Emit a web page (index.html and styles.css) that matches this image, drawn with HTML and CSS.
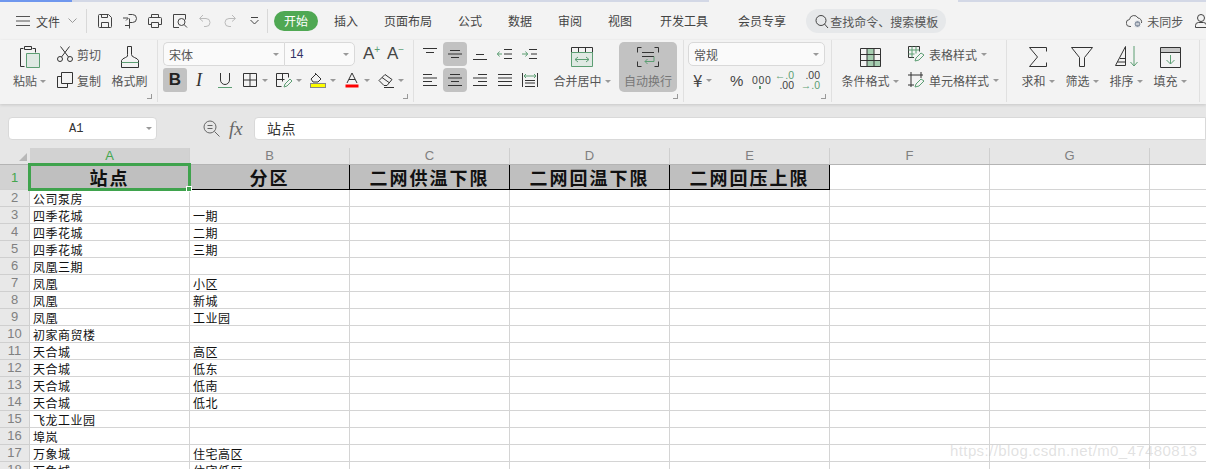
FILE: index.html
```html
<!DOCTYPE html>
<html lang="zh">
<head>
<meta charset="utf-8">
<title>WPS 表格</title>
<link rel="stylesheet" href="styles.css">
</head>
<body>
<div class="app">
  <div class="strip"><span class="strip-a"></span><span class="strip-b"></span><span class="strip-gap"></span><span class="strip-c"></span></div>

  <header class="menubar">
    <svg class="burger" width="14" height="12" viewBox="0 0 14 12"><path d="M0 1.500h14M0 6h14M0 10.500h14"/></svg>
    <span class="file">文件</span>
    <svg class="chev" width="9" height="6" viewBox="0 0 9 6"><path d="M.5 .5l4 4 4-4"/></svg>
    <span class="vsep vsep-a"></span>
    <div class="quick">
      <span class="qb"><svg width="16" height="16" viewBox="0 0 16 16"><path d="M1.500 2.500q0-1 1-1h9l3 3v9q0 1-1 1h-11q-1 0-1-1zM4.500 14.500v-5h7v5M4.500 1.500v3h6v-3"/></svg></span>
      <span class="qb"><svg width="16" height="16" viewBox="0 0 16 16"><path d="M6.500 1.500h4a4 4 0 0 1 0 8h-3M7.500 5.500v10M1 5h5M4 7.500l2.500-2.500M3 12.500h4"/></svg></span>
      <span class="qb"><svg width="16" height="16" viewBox="0 0 16 16"><path d="M4.500 4.500v-3h7v3M4.500 11.500h-3v-6q0-1 1-1h11q1 0 1 1v6h-3M4.500 9.500h7v5h-7z"/></svg></span>
      <span class="qb"><svg width="16" height="16" viewBox="0 0 16 16"><path d="M7 14.500h-5.500v-13h12v5"/><circle cx="9.500" cy="9" r="3.500"/><path d="M12 11.500l3 3"/></svg></span>
      <span class="qb dim"><svg width="14" height="14" viewBox="0 0 14 14"><path d="M5 1l-3.500 3.500 3.500 3M2 4.500h6a4 4 0 0 1 0 8h-2"/></svg></span>
      <span class="qb dim"><svg width="14" height="14" viewBox="0 0 14 14"><path d="M9 1l3.500 3.500-3.500 3M12 4.500h-6a4 4 0 0 0 0 8h2"/></svg></span>
      <span class="qb"><svg width="9" height="8" viewBox="0 0 9 8"><path d="M1 .5h7M.5 3l4 4 4-4"/></svg></span>
    </div>
    <span class="vsep"></span>
    <nav class="tabs">
      <span class="tab active">开始</span>
      <span class="tab">插入</span>
      <span class="tab">页面布局</span>
      <span class="tab">公式</span>
      <span class="tab">数据</span>
      <span class="tab">审阅</span>
      <span class="tab">视图</span>
      <span class="tab wide">开发工具</span>
      <span class="tab wider">会员专享</span>
    </nav>
    <div class="search">
      <svg width="14" height="15" viewBox="0 0 14 15"><circle cx="6" cy="6.500" r="5"/><path d="M9.500 10l3.500 4"/></svg>
      <span>查找命令、搜索模板</span>
    </div>
    <div class="sync">
      <svg width="17" height="14" viewBox="0 0 17 14"><path d="M5 12.500h-1a3.500 3.500 0 0 1-.5-7 4.500 4.500 0 0 1 8.500-1.500 4 4 0 0 1 3.500 5"/><circle class="badge" cx="11.500" cy="10" r="3.500"/><path class="badge-line" d="M10 10h3"/></svg>
      <span>未同步</span>
    </div>
    <svg class="user" width="16" height="14" viewBox="0 0 16 14"><circle cx="6" cy="4" r="3.500"/><path d="M.5 13.500v-2q0-3 3-3h5q3 0 3 3v2z"/></svg>
  </header>

  <section class="ribbon">
    <div class="group g1">
      <div class="big c-paste">
        <span class="big-icon"><svg width="22" height="24" viewBox="0 0 22 24"><path d="M5.500 21.500h-4v-18h3M13.500 3.500h3v4"/><path d="M5.500 1.500h7v3h-7z"/><path class="g-fill" d="M7.500 8.500h13v14h-13z"/></svg></span>
        <span class="lab">粘贴<i class="caret"></i></span>
      </div>
      <div class="stack c-clip">
        <div class="line"><svg width="16" height="16" viewBox="0 0 16 16"><circle cx="3" cy="13" r="2.500"/><circle cx="13" cy="13" r="2.500"/><path d="M4.500 11l8-10.500M11.500 11l-8-10.500"/></svg><span>剪切</span></div>
        <div class="line"><svg width="16" height="16" viewBox="0 0 16 16"><path d="M4.500 4.500h-4v11h10v-4"/><path d="M4.500 .5h11v11h-11z"/></svg><span>复制</span></div>
      </div>
      <div class="big c-brush">
        <span class="big-icon"><svg width="18" height="24" viewBox="0 0 18 24"><path d="M6.500 1.500h4v8q0 2 3 3t4 3v7h-17v-7q1-2 4-3t2-3z"/><path class="green" d="M.5 17.500h17"/></svg></span>
        <span class="lab">格式刷</span>
      </div>
      <i class="launch"></i>
    </div>

    <div class="group g2">
      <div class="g2-top">
        <div class="combo c-font"><span>宋体</span><i class="caret"></i></div>
        <div class="combo c-size"><span>14</span><i class="caret"></i></div>
        <span class="grow up">A<sup>+</sup></span>
        <span class="grow dn">A<sup>−</sup></span>
      </div>
      <div class="g2-bot">
        <span class="ib on bold">B</span>
        <span class="ib italic">I</span>
        <span class="ib u"><svg width="16" height="16" viewBox="0 0 16 16"><path d="M3.500 1v7a4.500 4.500 0 0 0 9 0v-7"/><path class="green" d="M1 15.500h14"/></svg></span>
        <span class="split"><span class="ib"><svg width="16" height="16" viewBox="0 0 16 16"><path d="M1.500 1.500h13v13h-13zM8 1.500v13M1.500 8h13"/></svg></span><i class="caret"></i></span>
        <span class="split"><span class="ib"><svg width="16" height="16" viewBox="0 0 16 16"><path d="M.5 1.500h12v4M.5 1.500v13h5M6.500 1.500v8M.5 7.500h8"/><path class="green" d="M8 15l1-3 5-5 2 2-5 5z"/></svg></span><i class="caret"></i></span>
        <span class="split"><span class="ib"><svg width="16" height="16" viewBox="0 0 16 16"><path d="M1 7l5-5 5 5-3 3h-5zM6 2l-1-1"/><rect class="yellow" x=".5" y="11.500" width="15" height="4"/></svg></span><i class="caret"></i></span>
        <span class="split"><span class="ib"><svg width="16" height="16" viewBox="0 0 16 16"><path d="M3 11l5-10 5 10M5 7.500h6"/><path class="red" d="M1.500 14h13"/></svg></span><i class="caret"></i></span>
        <span class="split"><span class="ib"><svg width="16" height="16" viewBox="0 0 16 16"><path d="M1 8.500l6-6 7 5-5 6h-3zM4 5.500l7 5M6 15.500h10"/></svg></span><i class="caret"></i></span>
      </div>
      <i class="launch"></i>
    </div>

    <div class="group g3">
      <div class="aligns">
        <span class="ab"><svg width="16" height="12" viewBox="0 0 16 12"><path d="M1 .5h14M4 4.500h8"/></svg></span>
        <span class="ab on"><svg width="16" height="12" viewBox="0 0 16 12"><path d="M3 2.500h10M1 6h14M4 9.500h8"/></svg></span>
        <span class="ab"><svg width="16" height="12" viewBox="0 0 16 12"><path d="M4 6.500h8M1 11.500h14"/></svg></span>
        <span class="ab"><svg width="16" height="12" viewBox="0 0 16 12"><path d="M7 1.500h8M7 6h8M7 10.500h8"/><path class="green" d="M5 6h-5M2.500 3.500l-2 2.500 2 2.500"/></svg></span>
        <span class="ab"><svg width="16" height="12" viewBox="0 0 16 12"><path d="M7 1.500h8M9 6h6M7 10.500h8"/><path class="green" d="M0 6h6M3.500 3.500l2 2.500-2 2.500"/></svg></span>
        <span class="ab"><svg width="14" height="14" viewBox="0 0 14 14"><path d="M0 1.500h9M0 5h14M0 8.500h9M0 12.500h14"/></svg></span>
        <span class="ab on"><svg width="14" height="14" viewBox="0 0 14 14"><path d="M2 1.500h10M0 5h14M3 8.500h8M0 12.500h14"/></svg></span>
        <span class="ab"><svg width="14" height="14" viewBox="0 0 14 14"><path d="M5 1.500h9M0 5h14M5 8.500h9M0 12.500h14"/></svg></span>
        <span class="ab"><svg width="14" height="14" viewBox="0 0 14 14"><path d="M0 1.500h14M0 5h14M0 8.500h14M0 12.500h14"/></svg></span>
        <span class="ab"><svg width="16" height="14" viewBox="0 0 16 14"><path d="M.5 0v14M15.500 0v14M3 7.500h10M3 10h10M3 13.500h10"/><path class="green" d="M2 3h12M4 1l-2 2 2 2M12 1l2 2-2 2"/></svg></span>
      </div>
      <div class="big c-merge">
        <span class="big-icon"><svg width="22" height="20" viewBox="0 0 22 20"><path d="M.5 .5h21v5h-21zM7.500 .5v5M14.500 .5v5"/><path class="g-fill" d="M.5 5.500h21v14h-21z"/><path class="green" d="M4 12.500h14M7 10l-3 2.500 3 2.500M15 10l3 2.500-3 2.500"/></svg></span>
        <span class="lab">合并居中<i class="caret"></i></span>
      </div>
      <div class="wrap-btn">
        <span class="big-icon"><svg width="22" height="20" viewBox="0 0 22 20"><path d="M4.500 .5h-4v5M17.500 .5h4v5M4.500 19.500h-4v-5M17.500 19.500h4v-5M5 5.500h12M5 9.500h12"/><path class="green" d="M17 9.500v5h-9M10.500 12l-2.500 2.500 2.500 2.500"/></svg></span>
        <span class="lab">自动换行</span>
      </div>
      <i class="launch"></i>
    </div>

    <div class="group g4">
      <div class="combo c-fmt"><span>常规</span><i class="caret"></i></div>
      <div class="num">
        <span class="n-yen"><span>¥</span><i class="caret"></i></span>
        <span class="n-pct">%</span>
        <span class="n-th">000<b></b></span>
        <span class="n-dec"><em>←.0</em><span>.00</span></span>
        <span class="n-inc"><span>.00</span><em>→.0</em></span>
      </div>
      <i class="launch"></i>
    </div>

    <div class="group g5">
      <div class="big c-cond">
        <span class="big-icon"><svg width="21" height="19" viewBox="0 0 21 19"><path d="M7 .5h7v6h-7zM7 6.500h7v6h7v6h-14z" class="g-block"/><path d="M.5 .5h20v18h-20zM.5 6.500h20M.5 12.500h20M7 .5v18M14 .5v18"/></svg></span>
        <span class="lab">条件格式<i class="caret"></i></span>
      </div>
      <div class="stack c-style">
        <div class="line"><svg width="17" height="16" viewBox="0 0 17 16"><path d="M6 11.500h-5.500v-11h11v5"/><path class="green" d="M.5 4h11M.5 8h6M4 .5v11M8 .5v7"/><path class="green" d="M7 15l1-3 5-5 3 2-5 5z"/></svg><span>表格样式</span><i class="caret"></i></div>
        <div class="line"><svg width="17" height="16" viewBox="0 0 17 16"><path d="M3 0v15M0 3h15M13 0v6M0 13h6"/><path class="green" d="M7 15l1-3 5-5 3 2-5 5z"/></svg><span>单元格样式</span><i class="caret"></i></div>
      </div>
    </div>

    <div class="group g6">
      <div class="big c-tool">
        <span class="big-icon"><svg width="18" height="20" viewBox="0 0 18 20"><path d="M17.500 4.500v-4h-17l8 9.500-8 9.500h17v-4"/></svg></span>
        <span class="lab">求和<i class="caret"></i></span>
      </div>
      <div class="big c-tool">
        <span class="big-icon"><svg width="22" height="20" viewBox="0 0 22 20"><path d="M.5 .5h21l-8 10v9h-5v-9z"/></svg></span>
        <span class="lab">筛选<i class="caret"></i></span>
      </div>
      <div class="big c-tool">
        <span class="big-icon"><svg width="23" height="22" viewBox="0 0 23 22"><path d="M.5 19.500l10-19v19zM5 12.500h5.500M2.500 16h8"/><path class="green" d="M19 0v20M15.500 16l3.500 4 3.500-4"/></svg></span>
        <span class="lab">排序<i class="caret"></i></span>
      </div>
      <div class="big c-tool">
        <span class="big-icon"><svg width="21" height="21" viewBox="0 0 21 21"><rect class="head" x=".5" y=".5" width="20" height="5"/><path d="M.5 .5h20v20h-20zM.5 5.500h20"/><path class="green" d="M10.500 8v9M6.500 13l4 4 4-4"/></svg></span>
        <span class="lab">填充<i class="caret"></i></span>
      </div>
    </div>
  </section>

  <section class="formula">
    <div class="namebox"><span>A1</span><i class="caret"></i></div>
    <svg class="zoomf" width="17" height="17" viewBox="0 0 17 17"><circle cx="7" cy="7" r="6"/><path d="M4.500 5.500h5M4.500 8.500h5M11.500 11.500l5 5"/></svg>
    <span class="fx">fx</span>
    <div class="input">站点</div>
  </section>

  <main class="sheet">
    <div class="colhead">
      <div class="corner"><i></i></div>
      <div class="ch sel">A</div><div class="ch">B</div><div class="ch">C</div><div class="ch">D</div><div class="ch">E</div><div class="ch">F</div><div class="ch">G</div><div class="ch last"></div>
    </div>
    <div class="row r1">
      <div class="rh sel">1</div>
      <div class="c t">站点</div><div class="c t">分区</div><div class="c t">二网供温下限</div><div class="c t">二网回温下限</div><div class="c t">二网回压上限</div><div class="c"></div><div class="c"></div><div class="c"></div>
    </div>
    <div class="row"><div class="rh">2</div><div class="c">公司泵房</div><div class="c"></div><div class="c"></div><div class="c"></div><div class="c"></div><div class="c"></div><div class="c"></div><div class="c"></div></div>
    <div class="row"><div class="rh">3</div><div class="c">四季花城</div><div class="c">一期</div><div class="c"></div><div class="c"></div><div class="c"></div><div class="c"></div><div class="c"></div><div class="c"></div></div>
    <div class="row"><div class="rh">4</div><div class="c">四季花城</div><div class="c">二期</div><div class="c"></div><div class="c"></div><div class="c"></div><div class="c"></div><div class="c"></div><div class="c"></div></div>
    <div class="row"><div class="rh">5</div><div class="c">四季花城</div><div class="c">三期</div><div class="c"></div><div class="c"></div><div class="c"></div><div class="c"></div><div class="c"></div><div class="c"></div></div>
    <div class="row"><div class="rh">6</div><div class="c">凤凰三期</div><div class="c"></div><div class="c"></div><div class="c"></div><div class="c"></div><div class="c"></div><div class="c"></div><div class="c"></div></div>
    <div class="row"><div class="rh">7</div><div class="c">凤凰</div><div class="c">小区</div><div class="c"></div><div class="c"></div><div class="c"></div><div class="c"></div><div class="c"></div><div class="c"></div></div>
    <div class="row"><div class="rh">8</div><div class="c">凤凰</div><div class="c">新城</div><div class="c"></div><div class="c"></div><div class="c"></div><div class="c"></div><div class="c"></div><div class="c"></div></div>
    <div class="row"><div class="rh">9</div><div class="c">凤凰</div><div class="c">工业园</div><div class="c"></div><div class="c"></div><div class="c"></div><div class="c"></div><div class="c"></div><div class="c"></div></div>
    <div class="row"><div class="rh">10</div><div class="c">初家商贸楼</div><div class="c"></div><div class="c"></div><div class="c"></div><div class="c"></div><div class="c"></div><div class="c"></div><div class="c"></div></div>
    <div class="row"><div class="rh">11</div><div class="c">天合城</div><div class="c">高区</div><div class="c"></div><div class="c"></div><div class="c"></div><div class="c"></div><div class="c"></div><div class="c"></div></div>
    <div class="row"><div class="rh">12</div><div class="c">天合城</div><div class="c">低东</div><div class="c"></div><div class="c"></div><div class="c"></div><div class="c"></div><div class="c"></div><div class="c"></div></div>
    <div class="row"><div class="rh">13</div><div class="c">天合城</div><div class="c">低南</div><div class="c"></div><div class="c"></div><div class="c"></div><div class="c"></div><div class="c"></div><div class="c"></div></div>
    <div class="row"><div class="rh">14</div><div class="c">天合城</div><div class="c">低北</div><div class="c"></div><div class="c"></div><div class="c"></div><div class="c"></div><div class="c"></div><div class="c"></div></div>
    <div class="row"><div class="rh">15</div><div class="c">飞龙工业园</div><div class="c"></div><div class="c"></div><div class="c"></div><div class="c"></div><div class="c"></div><div class="c"></div><div class="c"></div></div>
    <div class="row"><div class="rh">16</div><div class="c">埠岚</div><div class="c"></div><div class="c"></div><div class="c"></div><div class="c"></div><div class="c"></div><div class="c"></div><div class="c"></div></div>
    <div class="row"><div class="rh">17</div><div class="c">万象城</div><div class="c">住宅高区</div><div class="c"></div><div class="c"></div><div class="c"></div><div class="c"></div><div class="c"></div><div class="c"></div></div>
    <div class="row"><div class="rh">18</div><div class="c">万象城</div><div class="c">住宅低区</div><div class="c"></div><div class="c"></div><div class="c"></div><div class="c"></div><div class="c"></div><div class="c"></div></div>
    <div class="selection"><i></i></div>
    <div class="watermark">https://blog.csdn.net/m0_47480813</div>
  </main>
</div>
</body>
</html>
```
FILE: styles.css
```css
* { box-sizing: border-box; }
html, body { margin: 0; padding: 0; }
body { width: 1206px; height: 469px; overflow: hidden; background: #fff; font-family: "Noto Sans CJK SC", "Liberation Sans", sans-serif; font-size: 12px; color: #555; }
.app { width: 1206px; height: 469px; overflow: hidden; display: flex; flex-direction: column; }
svg { display: block; flex: none; fill: none; stroke: #333; stroke-width: 1; }
i { font-style: normal; }

.strip { height: 2px; display: flex; background: #f3f3f3; }
.strip-a { width: 72px; background: #6f97ee; }
.strip-b { width: 637px; background: #d3d8e6; }
.strip-gap { width: 249px; }
.strip-c { flex: 1; background: #d3d8e6; }

.menubar { height: 38px; display: flex; align-items: center; background: #f3f3f3; padding-left: 16px; }
.burger { stroke: #555; }
.file { margin-left: 6px; width: 24px; color: #444; white-space: nowrap; }
.chev { margin-left: 8px; stroke: #999; }
.vsep { width: 1px; height: 24px; background: #d8d8d8; flex: none; }
.vsep-a { margin-left: 9px; }
.quick { display: flex; margin-left: 5px; width: 175px; }
.qb { width: 25px; height: 24px; display: flex; align-items: center; justify-content: center; }
.qb svg { stroke: #444; }
.qb.dim svg { stroke: #bbb; }
.tabs { display: flex; align-items: center; margin-left: 6px; }
.tab { margin-left: 26px; color: #444; white-space: nowrap; line-height: 20px; }
.tab.wide { margin-left: 28px; }
.tab.wider { margin-left: 30px; }
.tab.active { margin-left: 0; width: 44px; height: 20px; border-radius: 10px; background: #4fa853; color: #fff; text-align: center; margin-right: -10px; }
.search { margin-left: 20px; width: 140px; height: 24px; border-radius: 12px; background: #e6e8ea; display: flex; align-items: center; padding-left: 9px; gap: 1px; white-space: nowrap; color: #555; flex: none; }
.search svg { stroke: #444; }
.sync { margin-left: 180px; display: flex; align-items: center; gap: 4px; white-space: nowrap; flex: none; }
.sync .badge { fill: #8d97a6; stroke: #f3f3f3; }
.sync .badge-line { stroke: #fff; }
.sync svg { stroke: #555; }
.user { margin-left: 12px; stroke: #444; }

.green { stroke: #5c9e73; fill: none; }
.g-fill { stroke: #5c9e73; fill: #dfe9e3; }
.g-block { stroke: none; fill: #a5cdb0; }
.yellow { fill: #ffff00; stroke: #888; }
.red { stroke: #ff0000; stroke-width: 3; }
.head { fill: #c8c8c8; stroke: none; }
.caret { display: inline-block; width: 0; height: 0; border-left: 3px solid transparent; border-right: 3px solid transparent; border-top: 3px solid #999; flex: none; }

.ribbon { height: 64px; display: flex; background: #f3f3f3; box-shadow: 0 1px 3px rgba(0, 0, 0, .14); position: relative; z-index: 1; }
.group { height: 62px; position: relative; display: flex; border-right: 1px solid #e0e0e0; padding-top: 2px; }
.launch { position: absolute; right: 5px; bottom: 3px; width: 5px; height: 5px; border-right: 1px solid #999; border-bottom: 1px solid #999; }
.big { display: flex; flex-direction: column; align-items: center; flex: none; }
.big-icon { height: 30px; display: flex; align-items: center; justify-content: center; }
.lab { height: 18px; line-height: 18px; white-space: nowrap; display: flex; align-items: center; gap: 3px; }
.stack { display: flex; flex-direction: column; gap: 2px; flex: none; }
.line { height: 24px; display: flex; align-items: center; gap: 4px; white-space: nowrap; }

.g1 { width: 158px; padding-left: 12px; }
.c-paste { width: 35px; }
.c-clip { margin-left: 10px; width: 48px; }
.c-brush { margin-left: 6px; width: 37px; }

.g2 { width: 256px; padding-left: 5px; flex-direction: column; gap: 2px; }
.g2-top, .g2-bot { display: flex; height: 24px; align-items: center; }
.combo { height: 24px; background: #fafafa; border: 1px solid #d9d9d9; display: flex; align-items: center; justify-content: space-between; padding: 0 5px 0 5px; color: #555; flex: none; }
.c-font { width: 121px; border-radius: 5px 0 0 5px; border-right: 0; }
.c-size { width: 71px; border-radius: 0 5px 5px 0; font-family: "Liberation Sans", sans-serif; font-size: 12px; color: #336; }
.grow { font-family: "Liberation Sans", sans-serif; font-size: 17px; color: #444; width: 24px; text-align: left; line-height: 24px; white-space: nowrap; }
.grow sup { font-size: 10px; color: #5c9e73; line-height: 0; vertical-align: 6px; }
.grow.up { margin-left: 8px; }
.ib { width: 24px; height: 24px; display: flex; align-items: center; justify-content: center; flex: none; border-radius: 3px; }
.ib.on { background: #c2c2c2; }
.bold { font-family: "Liberation Sans", sans-serif; font-weight: 700; font-size: 17px; color: #222; }
.italic { font-family: "Liberation Serif", serif; font-style: italic; font-size: 18px; color: #333; }
.ib.u { width: 27px; }
.split { width: 34px; display: flex; align-items: center; flex: none; }

.g3 { width: 270px; padding-left: 4px; }
.aligns { display: grid; grid-template-columns: repeat(5, 24px); grid-auto-rows: 24px; gap: 2px 1px; flex: none; width: 124px; height: 50px; }
.ab { display: flex; align-items: center; justify-content: center; border-radius: 4px; }
.ab.on { background: #c2c2c2; }
.c-merge { margin-left: 11px; width: 58px; }
.wrap-btn { margin-left: 8px; width: 58px; height: 50px; border-radius: 5px; background: #c2c2c2; color: #777; display: flex; flex-direction: column; align-items: center; flex: none; }

.g4 { width: 148px; padding-left: 4px; flex-direction: column; gap: 2px; }
.c-fmt { width: 137px; border-radius: 5px; }
.num { display: flex; height: 24px; align-items: center; font-family: "Liberation Sans", sans-serif; color: #444; }
.n-yen { width: 42px; padding-left: 5px; display: flex; align-items: center; gap: 4px; flex: none; font-family: "Noto Sans CJK SC", sans-serif; font-size: 17px; line-height: 20px; }
.n-pct { width: 22px; font-size: 15px; flex: none; }
.n-th { width: 26px; font-size: 10.5px; letter-spacing: .6px; position: relative; flex: none; }
.n-th b { display: block; position: absolute; left: 7px; top: 12px; width: 2px; height: 3px; background: #5c9e73; }
.n-dec, .n-inc { display: flex; flex-direction: column; font-size: 10.5px; line-height: 10px; align-items: flex-end; flex: none; }
.n-dec { width: 16px; }
.n-inc { width: 17px; margin-left: 9px; }
.n-dec em, .n-inc em { font-style: normal; color: #5c9e73; }

.g5 { width: 175px; padding-left: 7px; }
.c-cond { width: 62px; }
.c-style { margin-left: 7px; }
.g6 { width: 193px; padding-left: 9px; }
.c-tool { width: 44px; }

.formula { height: 44px; background: #e6e6e6; display: flex; align-items: center; padding-left: 8px; padding-top: 5px; }
.namebox { width: 149px; height: 23px; background: #fff; border: 1px solid #d9d9d9; border-radius: 4px; display: flex; align-items: center; padding: 0 4px 0 60px; justify-content: space-between; font-family: "Liberation Mono", monospace; font-size: 12px; color: #333; }
.zoomf { margin-left: 46px; stroke: #666; }
.fx { margin-left: 9px; width: 17px; font-family: "Liberation Serif", serif; font-style: italic; font-size: 19px; color: #666; line-height: 23px; }
.input { margin-left: 8px; flex: 1; height: 23px; background: #fff; border: 1px solid #d9d9d9; border-radius: 4px 0 0 4px; padding-left: 12px; font-size: 14px; letter-spacing: .5px; line-height: 21px; color: #333; }

.sheet { flex: 1; position: relative; background: #fff; overflow: hidden; }
.colhead { display: flex; height: 17px; background: #e6e6e6; border-bottom: 1px solid #b4b4b4; }
.corner { width: 30px; position: relative; flex: none; }
.corner i { position: absolute; right: 3px; bottom: 3px; width: 0; height: 0; border-left: 8px solid transparent; border-bottom: 8px solid #b8b8b8; }
.ch { width: 160px; flex: none; font-family: "Liberation Sans", sans-serif; font-size: 13px; line-height: 16px; text-align: center; color: #808080; border-right: 1px solid #cfcfcf; }
.ch.sel { background: #d2d2d2; color: #44a64e; }
.ch.last { border-right: 0; }
.row { display: flex; height: 17px; }
.r1 { height: 25px; }
.rh { width: 30px; flex: none; background: #e8e8e8; border-right: 1px solid #cfcfcf; border-bottom: 1px solid #cfcfcf; text-align: center; font-family: "Liberation Sans", sans-serif; font-size: 13px; line-height: 16px; color: #808080; }
.rh.sel { background: #d2d2d2; color: #44a64e; line-height: 25px; }
.c { width: 160px; flex: none; border-right: 1px solid #d4d4d4; border-bottom: 1px solid #d4d4d4; padding-left: 3px; font-size: 12px; letter-spacing: .5px; line-height: 18px; color: #111; white-space: nowrap; overflow: hidden; }
.c.t { background: #bfbfbf; border-right-color: #000; border-bottom-color: #000; padding-left: 0; text-align: center; font-size: 18px; font-weight: 700; letter-spacing: 2px; line-height: 25px; color: #111; }
.selection { position: absolute; left: 28px; top: 15px; width: 163px; height: 28px; border: 3px solid #3fa34d; }
.selection i { position: absolute; right: -4px; bottom: -4px; width: 6px; height: 6px; background: #3fa34d; border: 1px solid #fff; }
.watermark { position: absolute; left: 950px; top: 293px; font-family: "Liberation Sans", sans-serif; font-size: 15px; letter-spacing: .4px; line-height: 20px; color: rgba(190, 190, 190, .45); white-space: nowrap; }
```
